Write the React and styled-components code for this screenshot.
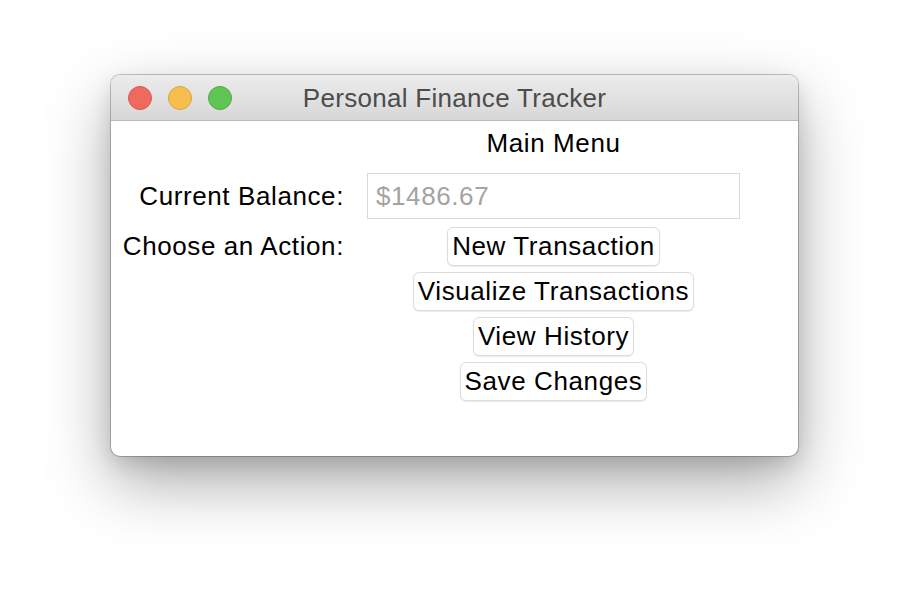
import React from "react";
import styled, { createGlobalStyle } from "styled-components";

const GlobalStyle = createGlobalStyle`
  body {
    margin: 0;
    background: #ffffff;
    font-family: "Liberation Sans", Arial, sans-serif;
  }
`;

const Page = styled.div`
  width: 910px;
  height: 604px;
  padding: 75px 0 0 111px;
  box-sizing: border-box;
`;

const Window = styled.div`
  width: 687px;
  height: 381px;
  border-radius: 9px;
  overflow: hidden;
  background: #ffffff;
  display: flex;
  flex-direction: column;
  box-shadow: 0 0 0 1px rgba(0, 0, 0, 0.22), 0 26px 64px rgba(0, 0, 0, 0.34),
    0 8px 20px rgba(0, 0, 0, 0.12);
`;

const TitleBar = styled.div`
  position: relative;
  height: 45px;
  flex-shrink: 0;
  display: flex;
  align-items: center;
  justify-content: center;
  background: linear-gradient(#ececec, #d7d7d7);
  border-bottom: 1px solid #b9b9b9;
`;

const Lights = styled.div`
  position: absolute;
  left: 17px;
  top: 11px;
  display: flex;
  gap: 16px;
`;

const Light = styled.span`
  width: 24px;
  height: 24px;
  border-radius: 50%;
  box-sizing: border-box;
  background: ${(p) => p.$color};
  border: 1px solid ${(p) => p.$edge};
`;

const Title = styled.div`
  font-size: 26px;
  color: #4c4c4c;
  letter-spacing: 0.3px;
  margin-top: 2px;
`;

const Form = styled.div`
  display: grid;
  grid-template-columns: 222px 373px;
  column-gap: 23px;
  padding: 7px 0 0 11px;
  align-items: start;
  letter-spacing: 0.6px;
`;

const Heading = styled.div`
  grid-column: 2;
  text-align: center;
  font-size: 26px;
  line-height: 30px;
  color: #000;
  margin-bottom: 15px;
`;

const Label = styled.div`
  text-align: right;
  font-size: 26px;
  color: #000;
  line-height: ${(p) => p.$height};
  margin-top: ${(p) => p.$offset || "0"};
`;

const Entry = styled.div`
  height: 46px;
  box-sizing: border-box;
  border: 1px solid #d9d9d9;
  padding-left: 8px;
  display: flex;
  align-items: center;
  font-size: 26px;
  color: #a3a3a3;
`;

const Actions = styled.div`
  display: flex;
  flex-direction: column;
  align-items: center;
  gap: 6px;
  margin-top: 8px;
`;

const Button = styled.button`
  height: 39px;
  padding: 0 4px;
  box-sizing: border-box;
  border: 1px solid #dcdcdc;
  border-radius: 6px;
  background: #ffffff;
  box-shadow: 0 1px 1px rgba(0, 0, 0, 0.08);
  font-family: inherit;
  font-size: 26px;
  letter-spacing: 0.6px;
  color: #000;
`;

const actions = ["New Transaction", "Visualize Transactions", "View History", "Save Changes"];

export default function App() {
  return (
    <Page>
      <GlobalStyle />
      <Window>
        <TitleBar>
          <Lights>
            <Light $color="#ee6a5e" $edge="#d45a4f" />
            <Light $color="#f5be4f" $edge="#d9a53f" />
            <Light $color="#61c554" $edge="#4fab44" />
          </Lights>
          <Title>Personal Finance Tracker</Title>
        </TitleBar>
        <Form>
          <Heading>Main Menu</Heading>
          <Label $height="46px">Current Balance:</Label>
          <Entry>$1486.67</Entry>
          <Label $height="39px" $offset="8px">Choose an Action:</Label>
          <Actions>
            {actions.map((a) => (
              <Button key={a}>{a}</Button>
            ))}
          </Actions>
        </Form>
      </Window>
    </Page>
  );
}
